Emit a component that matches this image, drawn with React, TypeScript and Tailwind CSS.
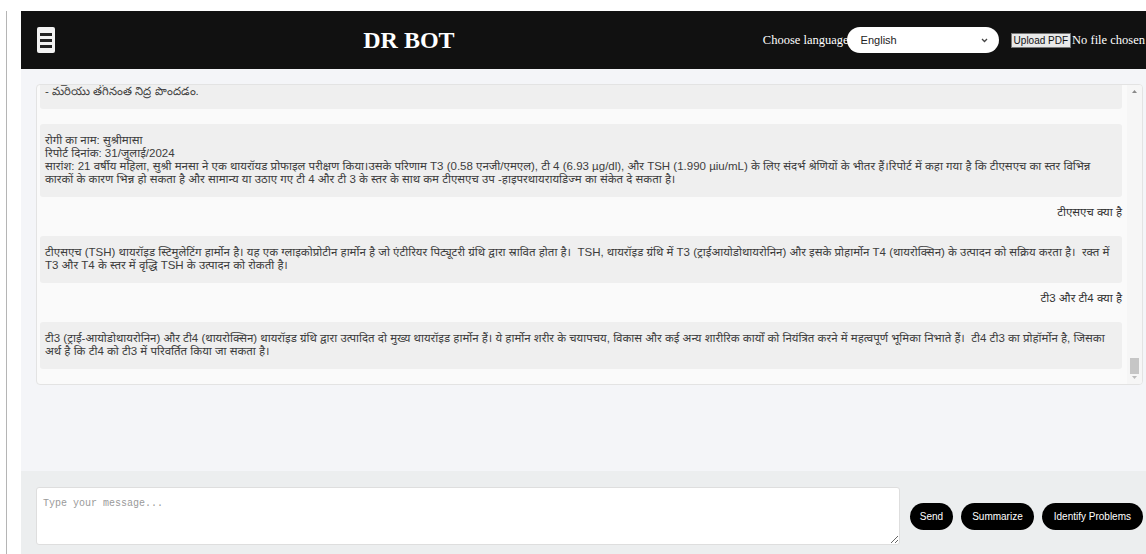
import { useEffect, useRef } from "react";

type Message = { from: "bot" | "user"; text: string };

// Conversation history shown in the chat window
const messages: Message[] = [
  { from: "user", text: "నా రిపోర్ట్‌ను తెలుగులో వివరించండి" },
  {
    from: "bot",
    text:
      "రోగి పేరు: శ్రీమతి మానస\nరిపోర్ట్ తేదీ: 31/జూలై/2024\nసారాంశం: 21 ఏళ్ల మహిళ, శ్రీమతి మానస థైరాయిడ్ ప్రొఫైల్ పరీక్ష చేయించుకున్నారు. T3 (0.58 ng/mL), T4 (6.93 µg/dl) మరియు TSH (1.990 µIU/mL) ఫలితాలు సాధారణ పరిధిలోనే ఉన్నాయి.",
  },
  { from: "user", text: "థైరాయిడ్ ఆరోగ్యం కోసం చిట్కాలు ఇవ్వండి" },
  {
    from: "bot",
    text:
      "థైరాయిడ్ ఆరోగ్యాన్ని కాపాడుకోవడానికి కొన్ని సూచనలు:\n- అయోడిన్ తగినంతగా ఉన్న సమతుల్య ఆహారం తీసుకోవడం,\n- క్రమం తప్పకుండా వ్యాయామం చేయడం,\n- ఒత్తిడిని తగ్గించుకోవడం,\n- మరియు తగినంత నిద్ర పొందడం.",
  },
  {
    from: "bot",
    text:
      "रोगी का नाम: सुश्रीमासा\nरिपोर्ट दिनांक: 31/जुलाई/2024\nसारांश: 21 वर्षीय महिला, सुश्री मनसा ने एक थायरॉयड प्रोफाइल परीक्षण किया।उसके परिणाम T3 (0.58 एनजी/एमएल), टी 4 (6.93 µg/dl), और TSH (1.990 µiu/mL) के लिए संदर्भ श्रेणियों के भीतर हैं।रिपोर्ट में कहा गया है कि टीएसएच का स्तर विभिन्न कारकों के कारण भिन्न हो सकता है और सामान्य या उठाए गए टी 4 और टी 3 के स्तर के साथ कम टीएसएच उप -हाइपरथायरायडिज्म का संकेत दे सकता है।",
  },
  { from: "user", text: "टीएसएच क्या है" },
  {
    from: "bot",
    text:
      "टीएसएच (TSH) थायरॉइड स्टिमुलेटिंग हार्मोन है। यह एक ग्लाइकोप्रोटीन हार्मोन है जो एंटीरियर पिट्यूटरी ग्रंथि द्वारा स्रावित होता है।  TSH, थायरॉइड ग्रंथि में T3 (ट्राईआयोडोथायरोनिन) और इसके प्रोहार्मोन T4 (थायरोक्सिन) के उत्पादन को सक्रिय करता है।  रक्त में T3 और T4 के स्तर में वृद्धि TSH के उत्पादन को रोकती है।",
  },
  { from: "user", text: "टी3 और टी4 क्या है" },
  {
    from: "bot",
    text:
      "टी3 (ट्राई-आयोडोथायरोनिन) और टी4 (थायरोक्सिन) थायरॉइड ग्रंथि द्वारा उत्पादित दो मुख्य थायरॉइड हार्मोन हैं। ये हार्मोन शरीर के चयापचय, विकास और कई अन्य शारीरिक कार्यों को नियंत्रित करने में महत्वपूर्ण भूमिका निभाते हैं।  टी4 टी3 का प्रोहॉर्मोन है, जिसका अर्थ है कि टी4 को टी3 में परिवर्तित किया जा सकता है।",
  },
];

function MenuButton() {
  return (
    <button className="flex h-[26px] w-[18px] flex-col items-center justify-center gap-[3px] rounded-[2px] bg-[#f2f2f2]">
      <span className="h-[3px] w-[12px] bg-[#222]" />
      <span className="h-[3px] w-[12px] bg-[#222]" />
      <span className="h-[3px] w-[12px] bg-[#222]" />
    </button>
  );
}

function Header() {
  return (
    <header className="flex h-[58px] items-center justify-between bg-[#111111] pl-4 pr-[13px] font-['Liberation_Serif',serif] text-white">
      <MenuButton />
      <h1 className="text-[24px] font-bold">DR BOT</h1>
      <div className="flex items-center text-[12.5px]">
        <span>Choose language</span>
        <div className="relative ml-[-2px] flex h-[26px] w-[152px] items-center rounded-full bg-white pl-[14px] font-['Liberation_Sans',sans-serif] text-[11px] text-[#222]">
          English
          <svg className="absolute right-[11px] top-[11px]" width="7" height="5" viewBox="0 0 7 5" fill="none">
            <path d="M1 1L3.5 3.5L6 1" stroke="#444" strokeWidth="1.3" />
          </svg>
        </div>
        <span className="ml-[12px] border border-[#777] bg-[#e9e9e9] px-[2px] font-['Liberation_Sans',sans-serif] text-[10px] leading-[13px] text-[#111]">
          Upload PDF
        </span>
        <span className="ml-[1px]">No file chosen</span>
      </div>
    </header>
  );
}

// Classic scrollbar drawn beside the message list, thumb parked at the bottom
function ScrollTrack() {
  return (
    <div className="flex w-[15px] shrink-0 flex-col items-center bg-[#f6f6f6]">
      <svg className="mt-[5px]" width="5" height="3" viewBox="0 0 5 3">
        <path d="M0 3L2.5 0L5 3Z" fill="#8a8a8a" />
      </svg>
      <div className="flex w-full flex-1 flex-col items-center justify-end pb-[2px]">
        <div className="h-[16px] w-[9px] bg-[#c6c6c6]" />
      </div>
      <svg className="mb-[5px]" width="5" height="3" viewBox="0 0 5 3">
        <path d="M0 0L2.5 3L5 0Z" fill="#bbbbbb" />
      </svg>
    </div>
  );
}

function ChatWindow() {
  const ref = useRef<HTMLDivElement>(null);

  // keep the latest answer in view
  useEffect(() => {
    if (ref.current) ref.current.scrollTop = ref.current.scrollHeight;
  }, []);

  return (
    <div className="flex h-[301px] overflow-hidden rounded-[4px] border border-[#e3e3e3] bg-[#fafafa]">
      <div ref={ref} className="flex-1 overflow-hidden pl-[3px] pr-[5px]">
        <div className="flow-root">
          {messages.map((m, i) =>
            m.from === "bot" ? (
              <div
                key={i}
                className="mb-[15px] whitespace-pre-wrap rounded-[3px] bg-[#efefef] px-[5px] pt-[10px] pb-[11px] text-[11.5px] leading-[13px] text-[#3d3d3d]"
              >
                {m.text}
              </div>
            ) : (
              <div key={i} className="-mt-[6px] mb-[17px] text-right text-[11.5px] leading-[13px] text-[#333]">
                {m.text}
              </div>
            )
          )}
        </div>
      </div>
      <ScrollTrack />
    </div>
  );
}

function Composer() {
  return (
    <div className="flex items-center gap-[8px] bg-[#eceeef] px-[15px] pt-[16px] pb-[9px]">
      <textarea
        placeholder="Type your message..."
        className="h-[58px] flex-1 rounded-[3px] border border-[#dedede] bg-white px-[6px] pt-[8px] font-['Liberation_Mono',monospace] text-[10px] placeholder:text-[#9a9a9a]"
      />
      <div className="ml-[2px] flex items-center gap-[8px] font-['Liberation_Sans',sans-serif] text-[10px] text-white">
        <button className="h-[27px] rounded-full bg-black px-[10px]">Send</button>
        <button className="h-[27px] rounded-full bg-black px-[11px]">Summarize</button>
        <button className="h-[27px] rounded-full bg-black px-[12px]">Identify Problems</button>
      </div>
    </div>
  );
}

export default function App() {
  return (
    <div className="h-[554px] w-full overflow-hidden bg-white pt-[11px] pl-[6px] font-['Liberation_Sans','Noto_Sans',sans-serif]">
      <div className="flex h-full border-l border-[#b5b5b5] pl-[14px]">
        <div className="flex w-[1137px] shrink-0 flex-col">
          <Header />
          <main className="flex-1 bg-[#f4f5f8] px-[15px] pt-[15px]">
            <ChatWindow />
          </main>
          <Composer />
        </div>
      </div>
    </div>
  );
}
